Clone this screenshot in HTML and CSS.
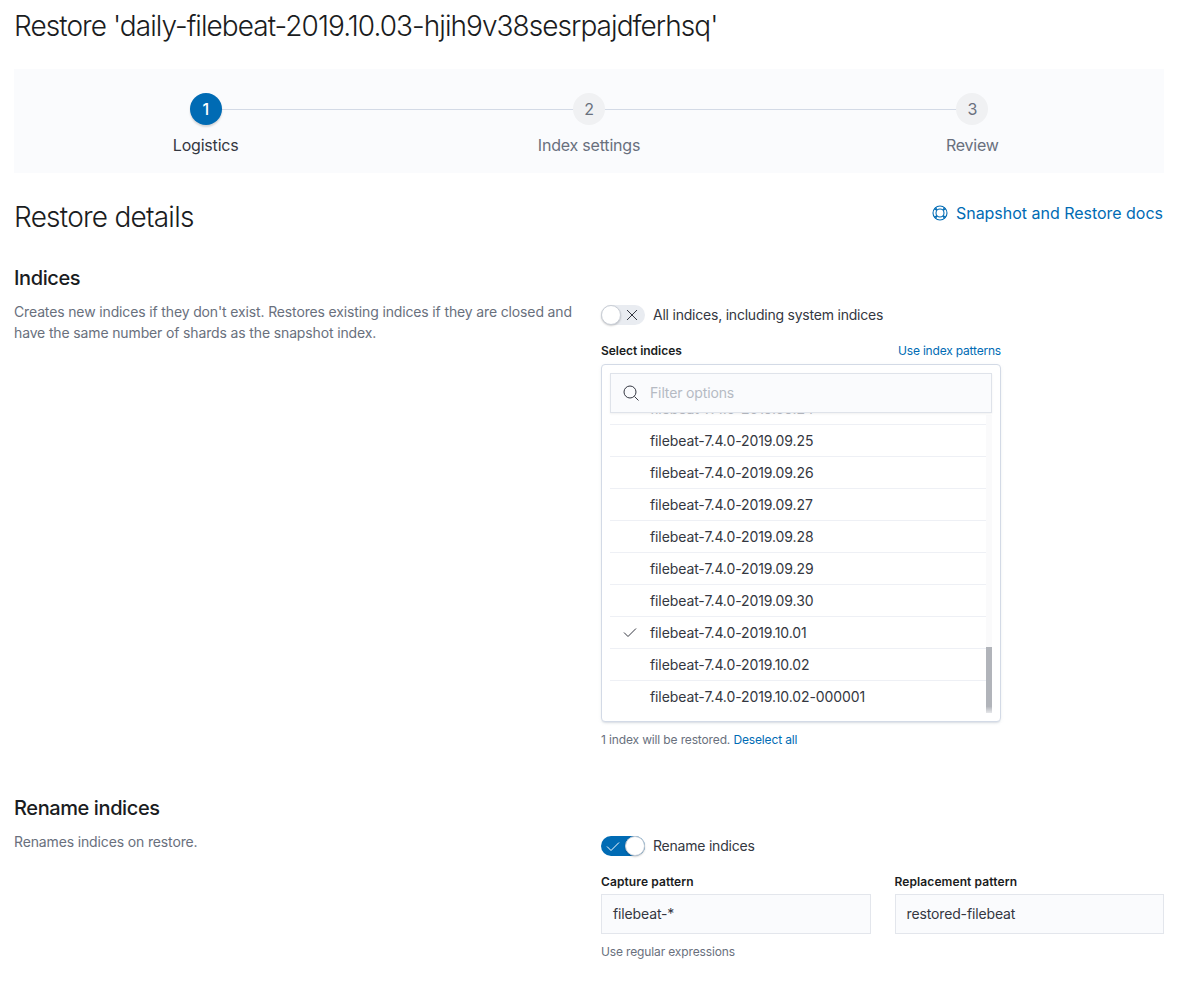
FILE: index.html
```html
<!DOCTYPE html>
<html lang="en">
<head>
    <meta charset="UTF-8">
    <title>Restore snapshot</title>
    <link rel="stylesheet" href="styles.css">
</head>
<body>
    <h1 class="page-title">Restore 'daily-filebeat-2019.10.03-hjih9v38sesrpajdferhsq'</h1>

    <div class="steps">
        <div class="step current">
            <div class="step-num">1</div>
            <div class="step-title">Logistics</div>
        </div>
        <div class="step">
            <div class="step-num">2</div>
            <div class="step-title">Index settings</div>
        </div>
        <div class="step">
            <div class="step-num">3</div>
            <div class="step-title">Review</div>
        </div>
    </div>

    <div class="details-head">
        <h2>Restore details</h2>
        <a class="docs-link" href="#">
            <svg width="16" height="16" viewBox="0 0 16 16" fill="none" stroke="#006bb4" stroke-width="1.1">
                <circle cx="8" cy="8" r="7"/>
                <circle cx="8" cy="8" r="4"/>
                <path d="M3.4 2.6l2 2.4M12.6 2.6l-2 2.4M3.4 13.4l2-2.4M12.6 13.4l-2-2.4M2.4 3.6l2.4 2M13.6 3.6l-2.4 2M2.4 12.4l2.4-2M13.6 12.4l-2.4-2"/>
            </svg>
            Snapshot and Restore docs
        </a>
    </div>

    <section class="form-row indices-row">
        <div class="form-desc">
            <h3>Indices</h3>
            <p>Creates new indices if they don't exist. Restores existing indices if they are closed and have the same number of shards as the snapshot index.</p>
        </div>
        <div class="form-fields">
            <div class="switch-row">
                <span class="switch">
                    <svg class="switch-icon" width="16" height="16" viewBox="0 0 16 16" fill="none" stroke="#343741" stroke-width="1">
                        <path d="M3 3l10 10M13 3L3 13"/>
                    </svg>
                    <span class="knob"></span>
                </span>
                <span class="switch-label">All indices, including system indices</span>
            </div>

            <div class="field-head">
                <label>Select indices</label>
                <a href="#">Use index patterns</a>
            </div>
            <div class="selectable">
                <div class="search-box">
                    <svg width="16" height="16" viewBox="0 0 16 16" fill="none" stroke="#343741" stroke-width="1">
                        <circle cx="7" cy="7" r="6"/>
                        <path d="M11.5 11.5l4 4"/>
                    </svg>
                    <span class="placeholder">Filter options</span>
                </div>
                <ul class="options">
                    <li class="clipped">filebeat-7.4.0-2019.09.24</li>
                    <li>filebeat-7.4.0-2019.09.25</li>
                    <li>filebeat-7.4.0-2019.09.26</li>
                    <li>filebeat-7.4.0-2019.09.27</li>
                    <li>filebeat-7.4.0-2019.09.28</li>
                    <li>filebeat-7.4.0-2019.09.29</li>
                    <li>filebeat-7.4.0-2019.09.30</li>
                    <li class="checked">
                        <svg width="16" height="16" viewBox="0 0 16 16" fill="none" stroke="#343741" stroke-width="1">
                            <path d="M2 8.5l4 4 8-8"/>
                        </svg>
                        filebeat-7.4.0-2019.10.01
                    </li>
                    <li>filebeat-7.4.0-2019.10.02</li>
                    <li>filebeat-7.4.0-2019.10.02-000001</li>
                </ul>
                <div class="scroll-thumb"></div>
            </div>
            <div class="help-text">1 index will be restored. <a href="#">Deselect all</a></div>
        </div>
    </section>

    <section class="form-row rename-row">
        <div class="form-desc">
            <h3>Rename indices</h3>
            <p>Renames indices on restore.</p>
        </div>
        <div class="form-fields">
            <div class="switch-row">
                <span class="switch on">
                    <svg class="switch-icon" width="16" height="16" viewBox="0 0 16 16" fill="none" stroke="#fff" stroke-width="1">
                        <path d="M2 8.5l4 4 8-8"/>
                    </svg>
                    <span class="knob"></span>
                </span>
                <span class="switch-label">Rename indices</span>
            </div>
            <div class="pattern-fields">
                <div class="pattern">
                    <label>Capture pattern</label>
                    <div class="text-input">filebeat-*</div>
                    <div class="help-text">Use regular expressions</div>
                </div>
                <div class="pattern">
                    <label>Replacement pattern</label>
                    <div class="text-input">restored-filebeat</div>
                </div>
            </div>
        </div>
    </section>
</body>
</html>
```

FILE: styles.css
```css
* {
    margin: 0;
    padding: 0;
    box-sizing: border-box;
    font-family: 'Inter', 'Liberation Sans', sans-serif;
}

body {
    background-color: #fff;
    color: #343741;
    padding: 8px 16px 0 14px;
    font-size: 14px;
    letter-spacing: -0.14px;
}

a {
    color: #006bb4;
    text-decoration: none;
}

.page-title {
    font-size: 28px;
    font-weight: 300;
    line-height: 36px;
    color: #1a1c21;
    letter-spacing: -0.95px;
    margin-bottom: 25px;
}

/* steps */
.steps {
    display: flex;
    height: 104px;
    padding-top: 24px;
    background-color: #fafbfd;
}

.step {
    flex: 1;
    position: relative;
    text-align: center;
}

.step::before {
    content: '';
    position: absolute;
    top: 16px;
    left: 50%;
    width: 100%;
    height: 1px;
    background-color: #d3dae6;
}

.step:last-child::before {
    display: none;
}

.step-num {
    position: relative;
    width: 32px;
    height: 32px;
    margin: 0 auto 8px;
    border-radius: 50%;
    background-color: #f0f1f3;
    color: #69707d;
    font-size: 16px;
    line-height: 32px;
}

.step-title {
    font-size: 16px;
    line-height: 24px;
    color: #69707d;
    letter-spacing: -0.2px;
}

.step.current .step-num {
    background-color: #006bb4;
    color: #fff;
    font-weight: 500;
    box-shadow: 0 2px 2px rgba(0, 0, 0, 0.15);
}

.step.current .step-title {
    color: #343741;
}

/* details heading */
.details-head {
    display: flex;
    justify-content: space-between;
    align-items: flex-start;
    margin-top: 26px;
    margin-bottom: 29px;
}

.details-head h2 {
    font-size: 28px;
    font-weight: 300;
    line-height: 36px;
    color: #1a1c21;
    letter-spacing: -0.76px;
}

.docs-link {
    display: flex;
    align-items: center;
    gap: 8px;
    font-size: 16px;
    line-height: 24px;
    margin-top: 2px;
    margin-right: 1px;
    letter-spacing: -0.02px;
}

/* form rows */
.form-row {
    display: grid;
    grid-template-columns: 1fr 1fr;
    gap: 24px;
}

.rename-row {
    margin-top: 46px;
}

.form-desc h3 {
    font-size: 20px;
    font-weight: 500;
    line-height: 28px;
    color: #1a1c21;
    letter-spacing: -0.4px;
    margin-bottom: 9px;
}

.form-desc p {
    color: #69707d;
    line-height: 21px;
}

.form-fields {
    padding-top: 40px;
}

.rename-row .form-fields {
    padding-top: 41px;
}

.switch-row {
    display: flex;
    align-items: center;
    gap: 8px;
    height: 22px;
}

.switch-label {
    padding-bottom: 2px;
    letter-spacing: -0.22px;
}

.switch {
    position: relative;
    width: 44px;
    height: 20px;
    border-radius: 10px;
    background-color: #e9ecf1;
}

.switch-icon {
    position: absolute;
    top: 2px;
    left: 23px;
}

.knob {
    position: absolute;
    top: 0;
    left: 0;
    width: 20px;
    height: 20px;
    border-radius: 50%;
    background-color: #fff;
    border: 1px solid #c9ced6;
    box-shadow: 0 1px 2px rgba(0, 0, 0, 0.2);
}

.switch.on {
    background-color: #006bb4;
}

.switch.on .switch-icon {
    left: 4px;
}

.switch.on .knob {
    left: 24px;
}

label {
    display: block;
    font-size: 12px;
    font-weight: 600;
    line-height: 16px;
    color: #1a1c21;
    letter-spacing: 0.1px;
}

.field-head {
    display: flex;
    justify-content: space-between;
    align-items: center;
    width: 400px;
    height: 16px;
    margin-top: 17px;
    font-size: 12px;
}

.field-head label {
    letter-spacing: -0.03px;
}

.field-head a {
    margin-bottom: 2px;
    letter-spacing: -0.19px;
}

.selectable {
    position: relative;
    width: 400px;
    height: 358px;
    margin-top: 5px;
    padding: 8px;
    border: 1px solid #d3dae6;
    border-radius: 4px;
    background-color: #fff;
    box-shadow: 0 2px 2px -1px rgba(152, 162, 179, 0.3), 0 1px 5px -2px rgba(152, 162, 179, 0.3);
}

/* faint scrollbar track behind the thumb */
.selectable::after {
    content: '';
    position: absolute;
    top: 50px;
    right: 8px;
    width: 6px;
    height: 232px;
    background-color: #fafafb;
}

.search-box {
    position: relative;
    z-index: 1;
    display: flex;
    align-items: center;
    gap: 11px;
    height: 40px;
    padding-left: 12px;
    background-color: #fafbfd;
    border: 1px solid #dfe3ea;
    box-shadow: 0 1px 2px rgba(0, 0, 0, 0.06);
    color: #b5bac3;
}

.placeholder {
    padding-bottom: 2px;
}

.options {
    list-style: none;
    height: 301px;
    width: 377px;
    overflow: hidden;
}

.options li {
    position: relative;
    height: 32px;
    padding-left: 40px;
    border-bottom: 1px solid #eef0f5;
    line-height: 31px;
    color: #343741;
    letter-spacing: -0.1px;
}

.options li:last-child {
    border-bottom: none;
}

/* top row is scrolled away, only the bottom of its text shows */
.options .clipped {
    margin-top: -20px;
    color: #b9bcc3;
}

.options .checked svg {
    position: absolute;
    left: 12px;
    top: 7px;
}

.scroll-thumb {
    position: absolute;
    top: 282px;
    right: 8px;
    width: 6px;
    height: 66px;
    background: linear-gradient(#b1b4ba 90%, #e6e7ea);
}

.help-text {
    margin-top: 10px;
    font-size: 12px;
    line-height: 16px;
    color: #69707d;
}

.pattern-fields {
    display: flex;
    gap: 24px;
    margin-top: 17px;
}

.pattern {
    flex: 1;
}

.text-input {
    height: 40px;
    margin-top: 4px;
    padding: 0 11px;
    background-color: #fafbfd;
    border: 1px solid #e3e6ec;
    line-height: 38px;
    color: #343741;
}
```
